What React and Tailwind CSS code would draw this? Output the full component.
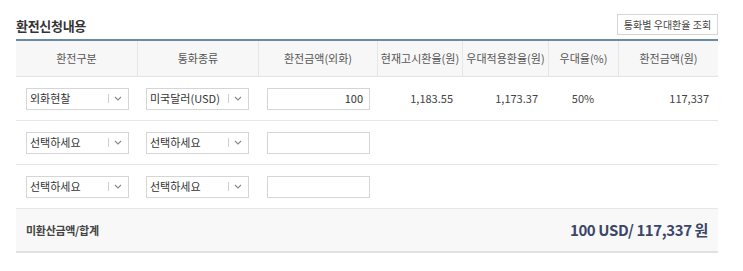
import React from "react";

const cols = "grid grid-cols-[121px_121px_119px_85px_86px_70px_100px]";

const headers = [
  "환전구분",
  "통화종류",
  "환전금액(외화)",
  "현재고시환율(원)",
  "우대적용환율(원)",
  "우대율(%)",
  "환전금액(원)",
];

const rows = [
  { type: "외화현찰", currency: "미국달러(USD)", amount: "100", rate: "1,183.55", pref: "1,173.37", pct: "50%", won: "117,337" },
  { type: "선택하세요", currency: "선택하세요", amount: "" },
  { type: "선택하세요", currency: "선택하세요", amount: "" },
];

const Select = ({ label }) => (
  <div className="flex items-center w-[103px] h-[22px] border border-[#d5d5d5] bg-white pl-[3px] pr-[6px]">
    <span className="flex-1 text-[11px] text-[#333] leading-none">{label}</span>
    <span className="w-px h-[9px] bg-[#d0d0d0] mr-[5px]" />
    <svg width="8" height="5" viewBox="0 0 8 5" fill="none">
      <path d="M1 1l3 3 3-3" stroke="#888" strokeWidth="1.1" />
    </svg>
  </div>
);

const App = () => {
  return (
    <div className="w-[743px] h-[271px] bg-white font-['Noto_Sans_CJK_KR',sans-serif] text-[#333]">
      <div className="w-[702px] ml-[16px]">
        {/* Title Section */}
        <div className="flex items-end justify-between h-[36px] pb-[1px]">
          <h3 className="text-[13px] font-bold text-[#333] leading-none mb-[3px] tracking-[-0.3px]">환전신청내용</h3>
          <button className="w-[101px] h-[21px] border border-[#d5d5d5] bg-white text-[10px] text-[#444] leading-none">
            통화별 우대환율 조회
          </button>
        </div>

        {/* Table */}
        <div className="mt-[3px] border-t-2 border-[#6b8aa3]">
          <div className={`${cols} h-[36px] bg-[#f7f7f7] border-b border-[#e3e3e3]`}>
            {headers.map((h, i) => (
              <div
                key={h}
                className={`flex items-center justify-center text-[11px] text-[#555] ${i > 0 ? "border-l border-[#e6e6e6]" : ""}`}
              >
                {h}
              </div>
            ))}
          </div>

          {rows.map((r, idx) => (
            <div key={idx} className={`${cols} h-[44px] items-center border-b border-[#e6e6e6] text-[11px]`}>
              <div className="pl-[10px]">
                <Select label={r.type} />
              </div>
              <div className="pl-[9px]">
                <Select label={r.currency} />
              </div>
              <div className="pl-[9px]">
                <div className="w-[103px] h-[22px] border border-[#d5d5d5] bg-white flex items-center justify-end pr-[6px] text-[11px] text-[#333]">
                  {r.amount}
                </div>
              </div>
              <div className="text-right pr-[9px] text-[#444]">{r.rate}</div>
              <div className="text-right pr-[10px] text-[#444]">{r.pref}</div>
              <div className="text-center text-[#444]">{r.pct}</div>
              <div className="text-right pr-[9px] text-[#444]">{r.won}</div>
            </div>
          ))}

          {/* Sum row */}
          <div className="flex items-center justify-between h-[44px] bg-[#f8f8f8] border-b-2 border-[#e1e1e1] pl-[10px] pr-[10px]">
            <span className="text-[11px] font-bold text-[#444] tracking-[-0.3px]">미환산금액/합계</span>
            <span className="text-[15px] font-bold text-[#3c4668] tracking-[-0.4px]">100 USD/ 117,337 원</span>
          </div>
        </div>
      </div>
    </div>
  );
};

export default App;
